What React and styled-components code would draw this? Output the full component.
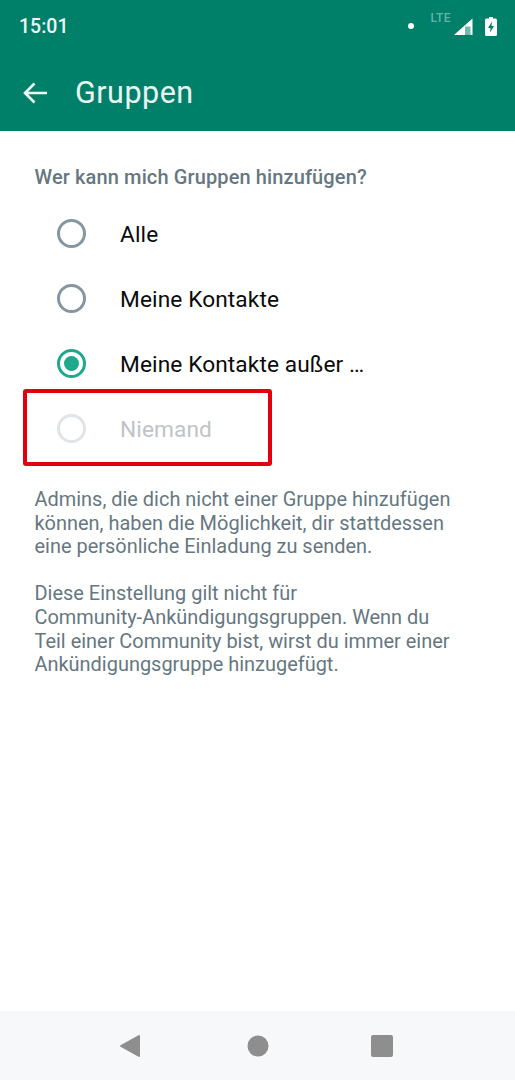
import React from "react";
import styled, { createGlobalStyle } from "styled-components";

const Global = createGlobalStyle`
  html, body { margin: 0; padding: 0; background: #fff; }
  body { font-family: Roboto, "Noto Sans", sans-serif; }
`;

const Screen = styled.div`
  width: 515px;
  height: 1080px;
  display: flex;
  flex-direction: column;
  overflow: hidden;
  background: #fff;
`;

const Header = styled.header`
  height: 131px;
  background: #008069;
  color: #fff;
  display: flex;
  flex-direction: column;
  flex: none;
`;

const StatusBar = styled.div`
  height: 52px;
  display: flex;
  align-items: center;
  justify-content: space-between;
  padding: 0 18px 0 19px;
  box-sizing: border-box;
`;

const Clock = styled.span`
  font-size: 19.5px;
  font-weight: 500;
  color: #eef7f5;
`;

const StatusIcons = styled.div`
  display: flex;
  align-items: center;
  height: 30px;
`;

const Dot = styled.span`
  width: 6px;
  height: 6px;
  border-radius: 50%;
  background: #fff;
  margin-right: 16px;
`;

const Lte = styled.span`
  font-size: 12px;
  font-weight: 500;
  color: #66b3a5;
  letter-spacing: 0.5px;
  align-self: flex-start;
  margin-right: 2px;
`;

const Toolbar = styled.div`
  flex: 1;
  display: flex;
  align-items: center;
  padding: 2px 0 0 22px;
`;

const Title = styled.h1`
  margin: 0 0 0 26px;
  font-size: 30.5px;
  font-weight: 400;
  color: #e8f5f2;
  letter-spacing: 0.5px;
`;

const Content = styled.main`
  flex: 1;
  padding: 34px 35px 0 34.5px;
`;

const Question = styled.h2`
  margin: 0;
  font-size: 20px;
  line-height: 25px;
  font-weight: 500;
  color: #667781;
  letter-spacing: 0.12px;
`;

const Options = styled.div`
  display: flex;
  flex-direction: column;
  margin-top: 11px;
  margin-left: 22.5px;
`;

const Option = styled.div`
  position: relative;
  height: 65px;
  display: flex;
  align-items: center;
  gap: 34px;
`;

const Radio = styled.span`
  width: 29px;
  height: 29px;
  box-sizing: border-box;
  border-radius: 50%;
  border: 3px solid ${(p) => (p.$checked ? "#1fa88b" : p.$disabled ? "#e0e4e7" : "#8696a0")};
  display: flex;
  align-items: center;
  justify-content: center;
  flex: none;
`;

const RadioDot = styled.span`
  width: 15px;
  height: 15px;
  border-radius: 50%;
  background: #1fa88b;
`;

const OptionLabel = styled.span`
  font-size: 22.7px;
  margin-top: 2px;
  color: ${(p) => (p.$disabled ? "#bfc3c6" : "#0b0b0b")};
  letter-spacing: 0.1px;
  white-space: nowrap;
`;

const Highlight = styled.div`
  position: absolute;
  left: -34px;
  top: -7px;
  width: 249px;
  height: 77px;
  border: 4px solid #e2000f;
  border-radius: 3px;
  box-sizing: border-box;
`;

const Notes = styled.div`
  margin-top: 27px;
  display: flex;
  flex-direction: column;
  gap: 23px;
  width: 450px;
`;

const Note = styled.p`
  margin: 0;
  font-size: 19.95px;
  line-height: 23.7px;
  color: #667781;
`;

const NavBar = styled.nav`
  height: 69px;
  flex: none;
  background: #f6f8fa;
  display: flex;
  align-items: center;
  justify-content: center;
`;

const NavSlot = styled.div`
  width: 124px;
  display: flex;
  justify-content: center;
  color: #8e8e8e;
`;

export default function App() {
  return (
    <Screen>
      <Global />
      <Header>
        <StatusBar>
          <Clock>15:01</Clock>
          <StatusIcons>
            <Dot />
            <Lte>LTE</Lte>
            <svg width="20" height="18" viewBox="0 0 20 18" style={{ marginRight: 12, marginTop: 1 }}>
              <path fill="#fff" d="M19.500 0.500V17H1z" />
              <path fill="#008069" d="M12 17V8.500h5.500V17z" opacity=".55" />
            </svg>
            <svg width="12" height="19" viewBox="0 0 12 19">
              <path fill="#fff" d="M4 0h4v1.500h2.500A1.500 1.500 0 0 1 12 3V17.500A1.500 1.500 0 0 1 10.500 19h-9A1.500 1.500 0 0 1 0 17.500V3A1.500 1.500 0 0 1 1.500 1.500H4z" />
              <path fill="#008069" d="M7 4.500L3 11h2.500L5 15.500 9 9H6.500z" />
            </svg>
          </StatusIcons>
        </StatusBar>
        <Toolbar>
          <svg width="27" height="24" viewBox="0 0 27 24" fill="none" stroke="#eef7f5" strokeWidth="2.600">
            <path d="M25 12H3M12.500 2.500L3 12l9.500 9.500" />
          </svg>
          <Title>Gruppen</Title>
        </Toolbar>
      </Header>
      <Content>
        <Question>Wer kann mich Gruppen hinzufügen?</Question>
        <Options>
          <Option>
            <Radio />
            <OptionLabel>Alle</OptionLabel>
          </Option>
          <Option>
            <Radio />
            <OptionLabel>Meine Kontakte</OptionLabel>
          </Option>
          <Option>
            <Radio $checked>
              <RadioDot />
            </Radio>
            <OptionLabel>Meine Kontakte außer …</OptionLabel>
          </Option>
          <Option>
            <Radio $disabled />
            <OptionLabel $disabled>Niemand</OptionLabel>
            <Highlight />
          </Option>
        </Options>
        <Notes>
          <Note>
            Admins, die dich nicht einer Gruppe hinzufügen<br />
            können, haben die Möglichkeit, dir stattdessen<br />
            eine persönliche Einladung zu senden.
          </Note>
          <Note>
            Diese Einstellung gilt nicht für<br />
            Community-Ankündigungsgruppen. Wenn du<br />
            Teil einer Community bist, wirst du immer einer<br />
            Ankündigungsgruppe hinzugefügt.
          </Note>
        </Notes>
      </Content>
      <NavBar>
        <NavSlot>
          <svg width="22" height="24" viewBox="0 0 22 24" style={{ marginLeft: -8 }}>
            <path fill="currentColor" stroke="currentColor" strokeWidth="2" strokeLinejoin="round" d="M20 2v20L2 12z" />
          </svg>
        </NavSlot>
        <NavSlot>
          <svg width="22" height="22" viewBox="0 0 22 22">
            <circle cx="11" cy="11" r="10.500" fill="currentColor" />
          </svg>
        </NavSlot>
        <NavSlot>
          <svg width="22" height="22" viewBox="0 0 22 22">
            <rect width="22" height="22" rx="2" fill="currentColor" />
          </svg>
        </NavSlot>
      </NavBar>
    </Screen>
  );
}
